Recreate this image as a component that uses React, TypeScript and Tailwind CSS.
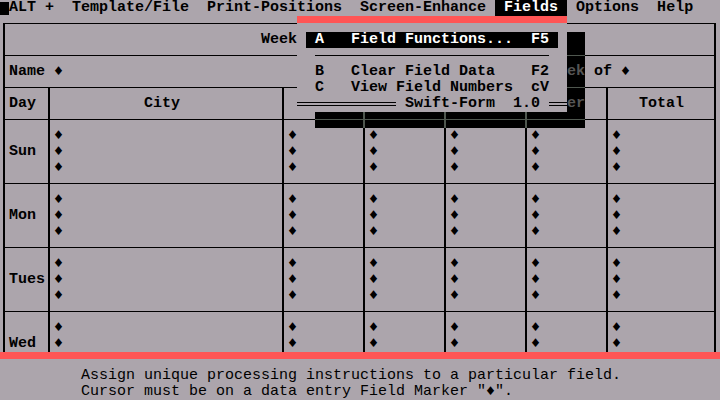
import React from "react";

const sp = (n: number) => " ".repeat(n);

const days = ["Sun", "Mon", "Tues", "Wed"];
const dataCols = 6; // City .. Total, each holds a field marker

const Line = ({ children }: { children?: React.ReactNode }) => (
  <div className="h-4 whitespace-pre">{children}</div>
);

// last block is cut by the status bar, so it only shows two lines
const DayBlock = ({ day, lines }: { day: string; lines: number }) => (
  <>
    <div className="bg-[#aca5ac] pt-2 pl-[4px]">
      <Line />
      <Line>{day}</Line>
    </div>
    {Array.from({ length: dataCols }).map((_, i) => (
      <div key={i} className="bg-[#aca5ac] pt-2 pl-[4px]">
        {Array.from({ length: lines }).map((_, j) => (
          <Line key={j}>♦</Line>
        ))}
      </div>
    ))}
  </>
);

const FieldsMenu = () => (
  <div className="absolute left-[297px] top-4 w-[270px] h-24 bg-[#aca5ac] text-black">
    <div className="h-[7px] bg-[#ff5555]" />
    <div className="h-[9px]" />
    <div className="ml-[9px] w-[252px] h-4 bg-black text-white whitespace-pre">
      {" A   Field Functions...  F5 "}
    </div>
    <div className="h-4 pt-[7px]">
      <div className="ml-[18px] w-[234px] h-px bg-black" />
    </div>
    <div className="ml-[18px]">
      <Line>B   Clear Field Data    F2</Line>
      <Line>C   View Field Numbers  cV</Line>
    </div>
    <div className="flex h-4 items-center">
      <div className="w-[99px] h-[4px] border-y border-black" />
      <div className="whitespace-pre">{" Swift-Form  1.0 "}</div>
      <div className="flex-1 h-[4px] border-y border-black" />
    </div>
  </div>
);

// DOS style drop shadow: underlying cells drawn dim on black
const MenuShadow = () => (
  <>
    <div className="absolute left-[567px] top-8 w-[18px] h-20 bg-black text-[#555] flex flex-col">
      <div className="h-[23px]" />
      <div className="h-px bg-[#4f574f]" />
      <div className="h-2" />
      <Line>ek</Line>
      <div className="h-[7px]" />
      <div className="h-px bg-[#4f574f]" />
      <div className="h-2" />
      <Line>er</Line>
    </div>
    <div className="absolute left-[315px] top-28 w-[270px] h-4 bg-black">
      <div className="absolute left-0 right-0 top-[7px] h-px bg-[#4f574f]" />
      <div className="absolute left-[48px] top-0 h-4 w-[2px] bg-[#4f574f]" />
      <div className="absolute left-[129px] top-0 h-4 w-[2px] bg-[#4f574f]" />
      <div className="absolute left-[210px] top-0 h-4 w-[2px] bg-[#4f574f]" />
    </div>
  </>
);

export default function App() {
  return (
    <div className="relative w-[720px] h-[400px] overflow-hidden bg-[#aca5ac] text-black font-['Liberation_Mono','DejaVu_Sans_Mono',monospace] text-[15px] leading-4 font-bold">
      {/* menu bar */}
      <div className="flex h-4 whitespace-pre">
        <span className="w-[9px] h-[13px] mt-[2px] bg-black" />
        <span>{"ALT +  Template/File  Print-Positions  Screen-Enhance "}</span>
        <span className="bg-black text-white">{" Fields "}</span>
        <span>{" Options  Help"}</span>
      </div>

      {/* form area */}
      <div className="h-[336px] overflow-hidden pt-[7px] pl-[3px]">
        <div className="grid w-fit grid-cols-[43px_232px_79px_79px_79px_79px_106px] grid-rows-[31px_31px_31px_63px_63px_63px_63px] gap-x-[2px] gap-y-px bg-black px-[2px] py-px">
          <div className="col-span-7 bg-[#aca5ac] pt-2 pl-[256px]">Week</div>
          <div className="col-span-7 flex bg-[#aca5ac] pt-2 pl-[4px] whitespace-pre">
            <span>Name ♦</span>
            <span className="ml-[531px]">of ♦</span>
          </div>
          <div className="bg-[#aca5ac] pt-2 pl-[4px]">Day</div>
          <div className="bg-[#aca5ac] pt-2 pl-[94px]">City</div>
          <div className="bg-[#aca5ac]" />
          <div className="bg-[#aca5ac]" />
          <div className="bg-[#aca5ac]" />
          <div className="bg-[#aca5ac]" />
          <div className="bg-[#aca5ac] pt-2 pl-[4px] whitespace-pre">{sp(3) + "Total"}</div>
          {days.map((d, i) => (
            <DayBlock key={d} day={d} lines={i === days.length - 1 ? 2 : 3} />
          ))}
        </div>
      </div>

      <div className="h-[7px] bg-[#ff5555]" />
      <div className="pt-[9px] pl-[81px] font-normal">
        <Line>Assign unique processing instructions to a particular field.</Line>
        <Line>Cursor must be on a data entry Field Marker "♦".</Line>
      </div>

      <MenuShadow />
      <FieldsMenu />
    </div>
  );
}
